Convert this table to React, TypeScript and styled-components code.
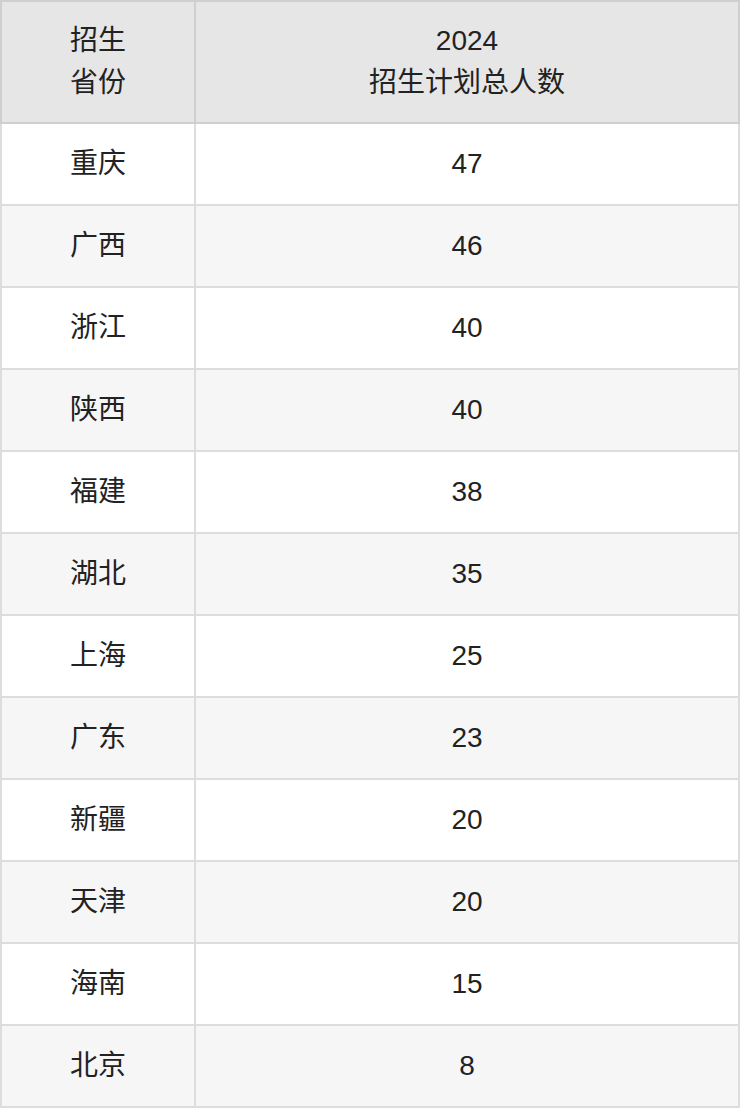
import React from "react";
import styled, { createGlobalStyle } from "styled-components";

const GlobalStyle = createGlobalStyle`
  html, body {
    margin: 0;
    padding: 0;
    background: #ffffff;
  }
  body {
    font-family: "Liberation Sans", "Noto Sans CJK SC", sans-serif;
    color: #333333;
  }
`;

const Table = styled.table`
  width: 740px;
  border-collapse: collapse;
  table-layout: fixed;
  border: 2px solid #d4d4d4;
  font-size: 28px;
  line-height: 42px;
`;

const HeadCell = styled.th<{ $wide?: boolean }>`
  width: ${(p) => (p.$wide ? "auto" : "172px")};
  background: #e6e6e6;
  border: 2px solid #cfcfcf;
  padding: 18px 10px;
  font-weight: normal;
  text-align: center;
  color: #222222;
`;

const Row = styled.tr<{ $striped: boolean }>`
  background: ${(p) => (p.$striped ? "#f6f6f6" : "#ffffff")};
`;

const Cell = styled.td`
  border: 2px solid #dddddd;
  padding: 19px 10px;
  text-align: center;
  color: #222222;
`;

const rows: [string, string][] = [
  ["重庆", "47"],
  ["广西", "46"],
  ["浙江", "40"],
  ["陕西", "40"],
  ["福建", "38"],
  ["湖北", "35"],
  ["上海", "25"],
  ["广东", "23"],
  ["新疆", "20"],
  ["天津", "20"],
  ["海南", "15"],
  ["北京", "8"],
];

export default function App() {
  return (
    <>
      <GlobalStyle />
      <Table>
        <thead>
          <tr>
            <HeadCell>
              招生
              <br />
              省份
            </HeadCell>
            <HeadCell $wide>
              2024
              <br />
              招生计划总人数
            </HeadCell>
          </tr>
        </thead>
        <tbody>
          {rows.map(([prov, n], i) => (
            <Row key={prov + i} $striped={i % 2 === 1}>
              <Cell>{prov}</Cell>
              <Cell>{n}</Cell>
            </Row>
          ))}
        </tbody>
      </Table>
    </>
  );
}
